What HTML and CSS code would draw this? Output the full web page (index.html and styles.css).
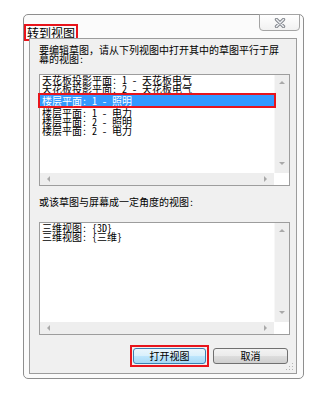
FILE: index.html
```html
<!DOCTYPE html>
<html lang="zh-CN">
<head>
    <meta charset="UTF-8">
    <meta name="viewport" content="width=device-width, initial-scale=1.0">
    <title>转到视图</title>
    <link rel="stylesheet" href="styles.css">
</head>
<body>
    <div class="page">
        <div class="dialog">
            <div class="titlebar">
                <span class="titleText">转到视图</span>
            </div>
            <button class="closeBtn" title="关闭">
                <svg width="12" height="10" viewBox="0 0 12 10">
                    <path d="M2.5 1.5 L9.5 8.5 M9.5 1.5 L2.5 8.5" stroke="#85898f" stroke-width="3.4" stroke-linecap="round" fill="none"/>
                    <path d="M2.5 1.5 L9.5 8.5 M9.5 1.5 L2.5 8.5" stroke="#eef0f3" stroke-width="1.4" stroke-linecap="round" fill="none"/>
                </svg>
            </button>

            <div class="panel">
                <p class="label twoLine">要编辑草图，请从下列视图中打开其中的草图平行于屏幕的视图:</p>

                <!-- 平行视图 -->
                <div class="listbox">
                    <div class="items">
                        <div class="item">天花板投影平面: 1 - 天花板电气</div>
                        <div class="item">天花板投影平面: 2 - 天花板电气</div>
                        <div class="item selected">楼层平面: 1 - 照明</div>
                        <div class="item">楼层平面: 1 - 电力</div>
                        <div class="item">楼层平面: 2 - 照明</div>
                        <div class="item">楼层平面: 2 - 电力</div>
                    </div>
                    <div class="vscroll"><span class="arrow up"></span><span class="arrow down"></span></div>
                    <div class="hscroll"><span class="arrow left"></span><span class="arrow right"></span></div>
                </div>

                <p class="label">或该草图与屏幕成一定角度的视图:</p>

                <!-- 三维视图 -->
                <div class="listbox tall">
                    <div class="items">
                        <div class="item">三维视图: {3D}</div>
                        <div class="item">三维视图: {三维}</div>
                    </div>
                    <div class="vscroll"><span class="arrow up"></span><span class="arrow down"></span></div>
                    <div class="hscroll"><span class="arrow left"></span><span class="arrow right"></span></div>
                </div>

                <div class="buttonRow">
                    <div class="mark">
                        <button class="btn default">打开视图</button>
                    </div>
                    <button class="btn">取消</button>
                </div>

                <svg class="grip" width="8" height="8" viewBox="0 0 8 8">
                    <rect x="6" y="0" width="1" height="1" fill="#b5b5b5"/>
                    <rect x="3" y="3" width="1" height="1" fill="#b5b5b5"/>
                    <rect x="6" y="3" width="1" height="1" fill="#b5b5b5"/>
                    <rect x="0" y="6" width="1" height="1" fill="#b5b5b5"/>
                    <rect x="3" y="6" width="1" height="1" fill="#b5b5b5"/>
                    <rect x="6" y="6" width="1" height="1" fill="#b5b5b5"/>
                </svg>
            </div>
        </div>
    </div>
</body>
</html>
```

FILE: styles.css
```css
body {
    margin: 0;
    background: #fff;
    font-family: "Noto Sans Mono CJK SC", "Noto Sans CJK SC", sans-serif;
    color: #000;
}

.page {
    padding: 14px 0 0 23px;
}

.dialog {
    position: relative;
    width: 281px;
    height: 365px;
    box-sizing: border-box;
    border: 1px solid #8e8e8e;
    border-radius: 5px;
    background: #fbfbfb;
    display: flex;
    flex-direction: column;
}

.titlebar {
    height: 23px;
    box-sizing: border-box;
    padding-top: 4px;
}

.titleText {
    display: inline-block;
    border: 2px solid #e8141b;
    padding: 0 1px;
    font-size: 12px;
    line-height: 13px;
    height: 13px;
    letter-spacing: 0;
}

.closeBtn {
    position: absolute;
    top: -1px;
    right: 3px;
    width: 41px;
    height: 17px;
    padding: 0;
    border: 1px solid #a4a4a4;
    border-radius: 0 0 4px 4px;
    background: linear-gradient(#ffffff, #f1f1f1);
    display: flex;
    align-items: center;
    justify-content: center;
}

.panel {
    position: relative;
    flex: 1;
    margin: 0 6px 4px 5px;
    border: 1px solid #9c9c9c;
    background: #f0f0f0;
    padding: 6px 6px 0 9px;
    display: flex;
    flex-direction: column;
}

.label {
    margin: 0;
    font-size: 10px;
    line-height: 12px;
    margin-top: 10px;
}

.label.twoLine {
    margin-top: 0;
    line-height: 9px;
    padding-right: 8px;
}

.listbox {
    margin-top: 11px;
    height: 112px;
    box-sizing: border-box;
    border: 1px solid #9d9d9d;
    background: #fff;
    display: grid;
    grid-template-columns: 1fr 15px;
    grid-template-rows: 1fr 12px;
}

.listbox.tall {
    margin-top: 14px;
    height: 113px;
}

.items {
    grid-column: 1;
    grid-row: 1;
    font-size: 10px;
    line-height: 9px;
    min-width: 0;
}

.item {
    height: 9px;
    padding-left: 2px;
    white-space: nowrap;
}

.item.selected {
    position: relative;
    z-index: 1;
    height: 11px;
    line-height: 11px;
    margin: 0 -2px 0 -2px;
    border: 2px solid #e8141b;
    background: #3399ff;
    color: #fff;
}

.vscroll {
    grid-column: 2;
    grid-row: 1;
    background: #eeeeee;
    border-left: 1px solid #f7f7f7;
    display: flex;
    flex-direction: column;
    align-items: center;
    justify-content: space-between;
    padding: 6px 0 8px;
}

.hscroll {
    grid-column: 1;
    grid-row: 2;
    background: #eeeeee;
    display: flex;
    align-items: center;
    justify-content: space-between;
    padding: 0 7px;
}

.arrow {
    width: 0;
    height: 0;
}

.arrow.up {
    border-left: 3px solid transparent;
    border-right: 3px solid transparent;
    border-bottom: 3px solid #a9a9a9;
}

.arrow.down {
    border-left: 3px solid transparent;
    border-right: 3px solid transparent;
    border-top: 3px solid #a9a9a9;
}

.arrow.left {
    border-top: 3px solid transparent;
    border-bottom: 3px solid transparent;
    border-right: 3px solid #a9a9a9;
}

.arrow.right {
    border-top: 3px solid transparent;
    border-bottom: 3px solid transparent;
    border-left: 3px solid #a9a9a9;
}

.buttonRow {
    margin-top: 10px;
    height: 22px;
    display: flex;
    justify-content: flex-end;
    align-items: center;
    gap: 4px;
    padding-right: 2px;
}

.mark {
    border: 2px solid #e8141b;
    padding: 1px;
    display: flex;
}

.btn {
    width: 75px;
    height: 16px;
    padding: 0;
    border: 1px solid #707070;
    border-radius: 3px;
    background: linear-gradient(#f3f3f3 0%, #ebebeb 50%, #dddddd 51%, #cfcfcf 100%);
    font-family: inherit;
    font-size: 10px;
    line-height: 14px;
    color: #000;
}

.btn.default {
    width: 73px;
    border-color: #3c7fb1;
    background: linear-gradient(#eaf6fd 0%, #d9f0fc 50%, #bee6fd 51%, #a7d9f5 100%);
}

.grip {
    position: absolute;
    right: 2px;
    bottom: 2px;
}
```
